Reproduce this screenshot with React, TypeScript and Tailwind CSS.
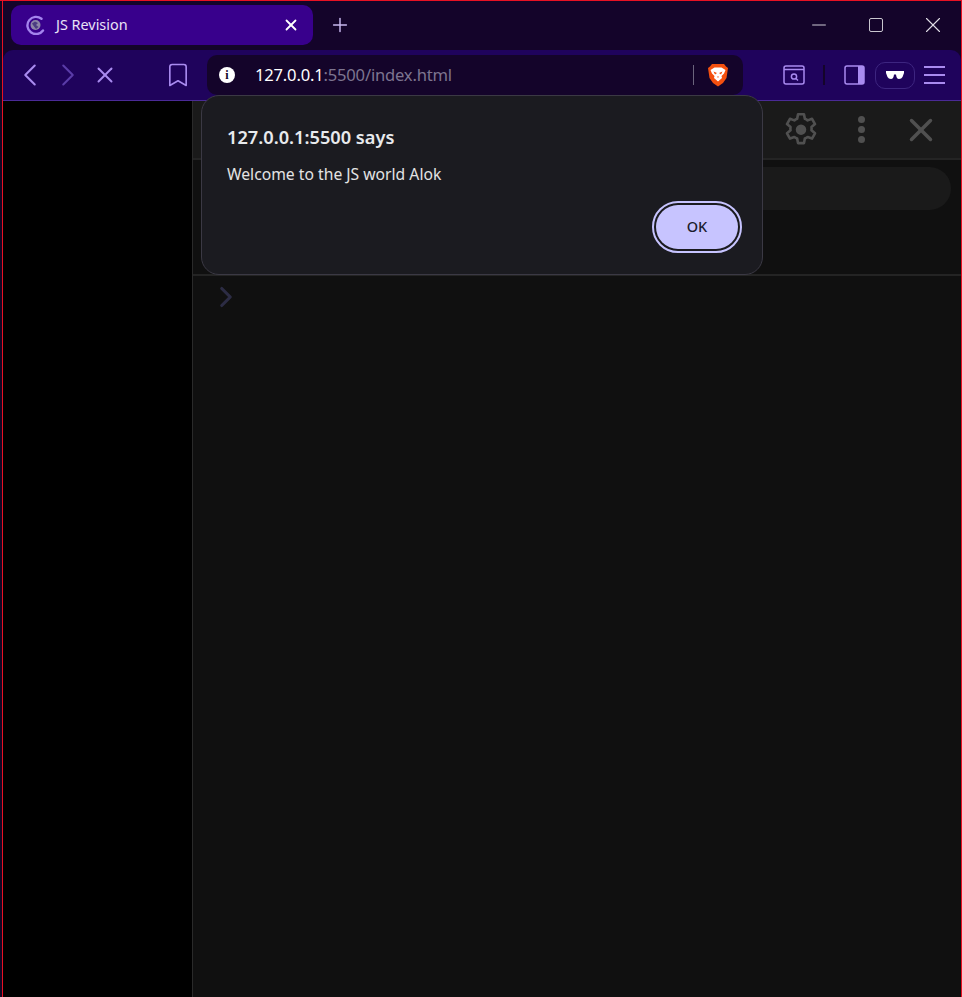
import React from 'react';
import { Minus, Plus, X, ChevronLeft, ChevronRight, Bookmark } from 'lucide-react';

const font = "font-['Noto_Sans','Open_Sans',sans-serif]";

const TabLogo = () => (
    <svg width="20" height="20" viewBox="0 0 20 20" fill="none">
        <path d="M16.5 3.8 A 8.6 8.6 0 1 0 18 15.5" stroke="#a484ee" strokeWidth="2.4" strokeLinecap="round" />
        <circle cx="10.5" cy="10" r="5" fill="#8d86a8" />
        <path d="M7 8.5 L10 6.5 L13 8 L11 10 L13.5 12 L11 14 L9 11.5 Z" fill="#4b3d82" />
    </svg>
);

const BraveLogo = () => (
    <svg width="22" height="24" viewBox="0 0 22 24">
        <path d="M5 1 H17 L19 3.5 L21 5 L19.5 15 L16 20 L11 23.5 L6 20 L2.5 15 L1 5 L3 3.5 Z" fill="#f4500f" />
        <path d="M3.5 7 L7.5 4.5 H14.5 L18.5 7 L17 10.5 L14.5 13 L15 15 L11 18.5 L7 15 L7.5 13 L5 10.5 Z" fill="#ffffff" />
        <path d="M6.5 8.5 L10 10 L8 11.5 Z M15.5 8.5 L12 10 L14 11.5 Z M10 13.5 H12 L11 15 Z" fill="#f4500f" />
    </svg>
);

const TitleBar = () => (
    <div className="flex h-[49px] items-start bg-[#14042a] pl-[8px] pt-[4px]">
        <div className="flex h-[40px] w-[302px] items-center rounded-[10px] bg-[#38008c] pl-[14px] pr-[13px]">
            <TabLogo />
            <span className={`ml-[11px] flex-1 text-[14.4px] text-[#e9e3f7] ${font}`}>JS Revision</span>
            <X size={18} strokeWidth={2.4} className="text-white" />
        </div>
        <Plus size={22} strokeWidth={1.6} className="ml-[16px] mt-[9px] text-[#c8b8ef]" />
        <div className="ml-auto flex h-[40px] items-center text-[#e0dde6]">
            <div className="flex w-[57px] justify-center"><Minus size={22} strokeWidth={1} /></div>
            <div className="flex w-[57px] justify-center">
                <div className="h-[14px] w-[14px] rounded-[2px] border border-[#c9c6cf]" />
            </div>
            <div className="flex w-[57px] justify-center"><X size={26} strokeWidth={1} /></div>
        </div>
    </div>
);

const UrlBar = () => (
    <div className="ml-[15px] flex h-[40px] w-[536px] shrink-0 items-center rounded-[10px] bg-[#14042a] pl-[12px] pr-[14px]">
        <span className="flex h-[16px] w-[16px] items-center justify-center rounded-full bg-white font-['Liberation_Serif',serif] text-[12px] font-bold text-[#14042a]">i</span>
        <span className={`ml-[20px] flex-1 text-[16.6px] tracking-[-0.2px] text-[#7d7590] ${font}`}>
            <span className="text-white">127.0.0.1</span>:5500/index.html
        </span>
        <div className="h-[20px] w-[1px] bg-[#6b647c]" />
        <div className="ml-[13px]"><BraveLogo /></div>
    </div>
);

const ToolBar = () => (
    <div className="flex h-[51px] items-center rounded-t-[10px] border-b border-[#4a2a96] bg-[#1f035c] pl-[8px]">
        <ChevronLeft size={38} strokeWidth={1.3} className="shrink-0 text-[#a98bf0]" />
        <ChevronRight size={38} strokeWidth={1.3} className="shrink-0 text-[#5a3ca8]" />
        <X size={26} strokeWidth={1.8} className="ml-[5px] shrink-0 text-[#a98bf0]" />
        <Bookmark size={28} strokeWidth={1.4} className="ml-[46px] shrink-0 text-[#a98bf0]" />
        <UrlBar />
        <svg width="22" height="20" viewBox="0 0 22 20" fill="none" className="ml-[40px] shrink-0">
            <rect x="1" y="1" width="20" height="18" rx="2" stroke="#a98bf0" strokeWidth="1.5" />
            <path d="M1 4.5 H21" stroke="#a98bf0" strokeWidth="1.5" />
            <circle cx="11" cy="11.5" r="2.6" stroke="#a98bf0" strokeWidth="1.5" />
            <path d="M13 13.5 L15 15.5" stroke="#a98bf0" strokeWidth="1.5" />
        </svg>
        <div className="ml-[18px] h-[20px] w-[2px] shrink-0 bg-[#14042a]" />
        <svg width="21" height="20" viewBox="0 0 21 20" fill="none" className="ml-[19px] shrink-0">
            <rect x="1" y="1" width="19" height="18" rx="2" stroke="#a98bf0" strokeWidth="1.5" />
            <rect x="14" y="1" width="6" height="18" fill="#a98bf0" />
        </svg>
        <div className="ml-[10px] flex h-[27px] w-[40px] shrink-0 items-center justify-center rounded-[10px] border border-[#3d2580]">
            <svg width="18" height="8" viewBox="0 0 18 8">
                <path d="M0 0 H18 V2 L16.5 6 Q15.5 8 13 8 Q10.5 8 10 3.5 H8 Q7.5 8 5 8 Q2.5 8 1.5 6 L0 2 Z" fill="#ffffff" />
            </svg>
        </div>
        <div className="ml-[9px] flex w-[21px] shrink-0 flex-col gap-[6px]">
            <div className="h-[2px] bg-[#a98bf0]" />
            <div className="h-[2px] bg-[#a98bf0]" />
            <div className="h-[2px] bg-[#a98bf0]" />
        </div>
    </div>
);

const DevTools = () => (
    <div className="flex flex-1 flex-col border-l border-[#2a2a2a] bg-[#101010]">
        <div className="flex h-[59px] items-center justify-end border-b-2 border-[#242424] bg-[#1a1a1a] pr-[21px] text-[#505050]">
            <svg width="42" height="42" viewBox="0 0 24 24" fill="none" stroke="currentColor" strokeWidth="1.5" strokeLinejoin="round">
                <path d="M10.3 3h3.4l.5 2.6c.6.2 1.1.5 1.6.9l2.5-.9 1.7 3-2 1.7a6.6 6.6 0 0 1 0 1.9l2 1.7-1.7 3-2.5-.9c-.5.4-1 .7-1.6.9l-.5 2.6h-3.4l-.5-2.6c-.6-.2-1.1-.5-1.6-.9l-2.5.9-1.7-3 2-1.7a6.6 6.6 0 0 1 0-1.9l-2-1.7 1.7-3 2.5.9c.5-.4 1-.7 1.6-.9z" />
                <circle cx="12" cy="11.8" r="3" fill="currentColor" stroke="none" />
            </svg>
            <div className="ml-[36px] flex flex-col gap-[3px]">
                <div className="h-[7px] w-[7px] rounded-full bg-[#505050]" />
                <div className="h-[7px] w-[7px] rounded-full bg-[#505050]" />
                <div className="h-[7px] w-[7px] rounded-full bg-[#505050]" />
            </div>
            <X size={38} strokeWidth={2.2} className="ml-[37px]" />
        </div>
        <div className="h-[116px] border-b-2 border-[#242424] pl-[9px] pr-[10px] pt-[7px]">
            <div className="h-[43px] rounded-full bg-[#1a1a1a]" />
        </div>
        <div className="pl-[16px] pt-[4px]">
            <ChevronRight size={34} strokeWidth={2.2} className="text-[#2c2c44]" />
        </div>
    </div>
);

const AlertDialog = () => (
    <div className={`absolute left-[201px] top-[95px] flex h-[180px] w-[562px] flex-col rounded-[18px] border border-[#3b3944] bg-[#1b1b20] pb-[21px] pl-[25px] pr-[20px] pt-[28px] ${font}`}>
        <div className="text-[18.2px] font-semibold leading-[26px] text-[#e8eaed]">127.0.0.1:5500 says</div>
        <div className="mt-[13px] text-[15.7px] leading-[22px] text-[#e3e3e3]">Welcome to the JS world Alok</div>
        <div className="mt-auto flex justify-end">
            <div className="rounded-full border-2 border-[#c7c4ff] p-[2px]">
                <button className="block h-[44px] w-[82px] rounded-full bg-[#c7c4ff] text-[14.5px] font-medium text-[#1c1c2e]">OK</button>
            </div>
        </div>
    </div>
);

export default function App() {
    return (
        <div className="relative h-[997px] w-[962px] overflow-hidden bg-[#100824] pl-[2px]">
            <div className="absolute left-0 right-0 top-0 h-[1px] bg-[#e81123]" />
            <div className="flex h-full flex-col border-x border-[#e81123] bg-[#14042a] pt-[1px]">
                <TitleBar />
                <ToolBar />
                <div className="flex flex-1">
                    <div className="w-[189px] bg-black" />
                    <DevTools />
                </div>
            </div>
            <AlertDialog />
        </div>
    );
}
